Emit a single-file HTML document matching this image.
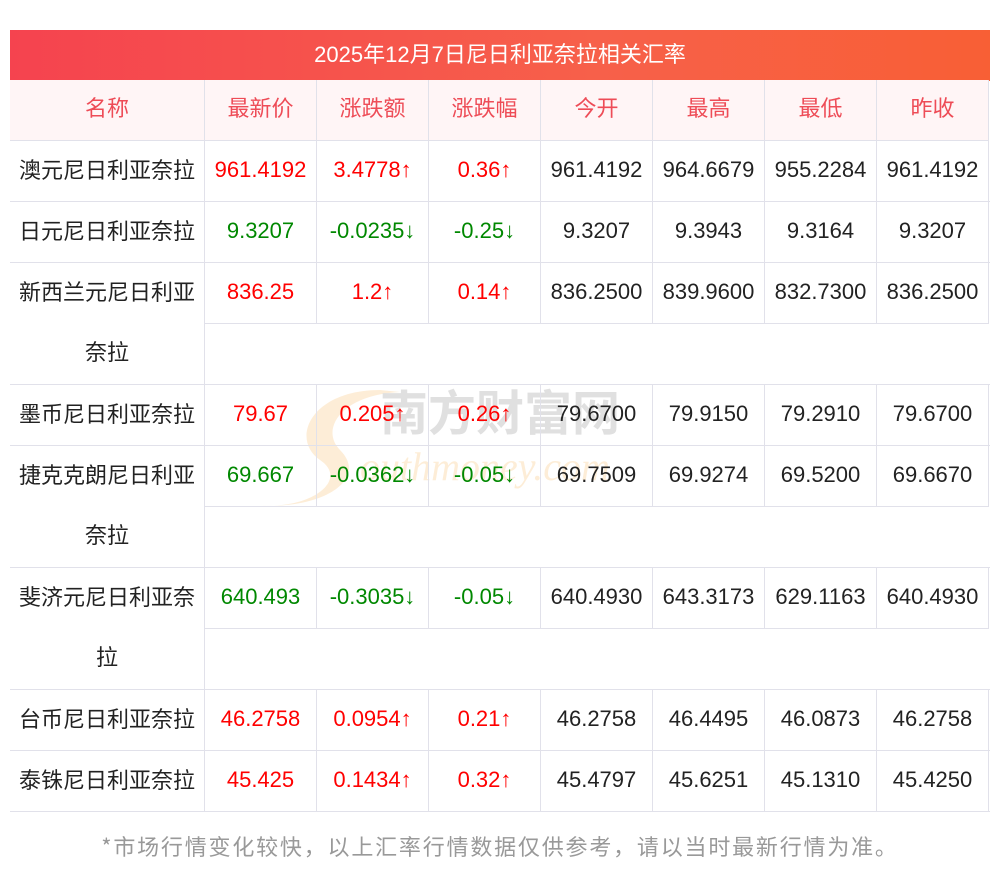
<!DOCTYPE html>
<html><head><meta charset="utf-8"><style>
body{margin:0;background:#fff;font-family:"Liberation Sans","Noto Sans CJK SC",sans-serif;}
.a{position:absolute;box-sizing:border-box;}
.t{left:10px;top:30px;width:980px;height:51px;background:linear-gradient(90deg,#f5434f,#f7604a 60%,#f85f35);color:#fff;font-size:22px;text-align:center;line-height:49px;}
.c{font-size:22px;text-align:center;line-height:58px;border-right:1px solid #e1e1ea;border-bottom:1px solid #e1e1ea;white-space:nowrap;}
.h{background:#fff5f6;color:#ee4c57;}
.n{color:#222;line-height:60px;white-space:normal;padding:0 4px;}
.r{color:#f00}.g{color:#080}.k{color:#222}
.f{left:0;width:1000px;top:830px;text-align:center;font-size:22px;color:#999;font-family:"Noto Sans CJK SC","Liberation Sans",sans-serif;line-height:32px;letter-spacing:1.8px;}
</style></head><body>
<div class="a" style="left:250px;top:380px;width:520px;height:140px;opacity:.45">
<svg width="520" height="140"><path d="M130 10 C60 10 40 60 70 80 C100 100 60 130 10 125 C70 130 120 100 90 70 C70 50 90 15 150 12Z" fill="#fbd9a8"/>
<text x="130" y="50" font-size="48" fill="#bbb" font-family="Noto Sans CJK SC" font-weight="bold">南方财富网</text>
<text x="110" y="100" font-size="40" fill="#fbd9a8" font-style="italic" font-family="Liberation Serif">outhmoney.com</text></svg></div>
<div class="a t">2025年12月7日尼日利亚奈拉相关汇率</div>
<div id="tb"></div>
<div class="a f">*市场行情变化较快，以上汇率行情数据仅供参考，请以当时最新行情为准。</div>
<script>
var X=[10,205,317,429,541,653,765,877,989];
var rows=[
["h","名称","最新价","涨跌额","涨跌幅","今开","最高","最低","昨收",80,61],
["r","澳元尼日利亚奈拉","961.4192","3.4778↑","0.36↑","961.4192","964.6679","955.2284","961.4192",141,61],
["g","日元尼日利亚奈拉","9.3207","-0.0235↓","-0.25↓","9.3207","9.3943","9.3164","9.3207",202,61],
["r","新西兰元尼日利亚奈拉","836.25","1.2↑","0.14↑","836.2500","839.9600","832.7300","836.2500",263,122],
["r","墨币尼日利亚奈拉","79.67","0.205↑","0.26↑","79.6700","79.9150","79.2910","79.6700",385,61],
["g","捷克克朗尼日利亚奈拉","69.667","-0.0362↓","-0.05↓","69.7509","69.9274","69.5200","69.6670",446,122],
["g","斐济元尼日利亚奈拉","640.493","-0.3035↓","-0.05↓","640.4930","643.3173","629.1163","640.4930",568,122],
["r","台币尼日利亚奈拉","46.2758","0.0954↑","0.21↑","46.2758","46.4495","46.0873","46.2758",690,61],
["r","泰铢尼日利亚奈拉","45.425","0.1434↑","0.32↑","45.4797","45.6251","45.1310","45.4250",751,61]];
var h="";
rows.forEach(function(r){var top=r[9],ht=r[10],cl=r[0];
if(cl!="h")h+='<div class="a" style="left:10px;top:'+top+'px;width:980px;height:'+ht+'px;border-bottom:1px solid #e1e1ea"></div>';
for(var i=0;i<8;i++){var w=X[i+1]-X[i];var hh=(i==0?ht:61);
var c="a c"+(cl=="h"?" h":(i==0?" n":(i<4?" "+cl:" k")));
h+='<div class="'+c+'" style="left:'+X[i]+'px;top:'+top+'px;width:'+w+'px;height:'+hh+'px">'+r[i+1]+'</div>';}
});
document.getElementById("tb").innerHTML=h;
</script>
</body></html>
